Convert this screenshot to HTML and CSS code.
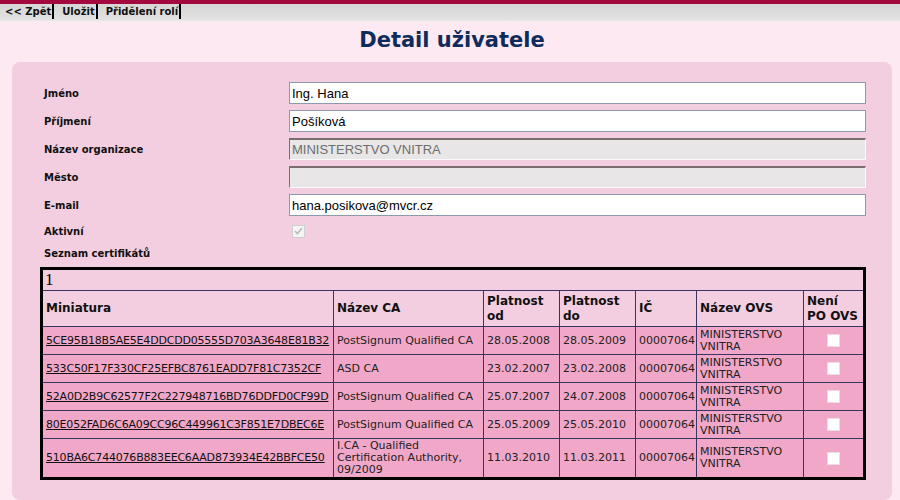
FILE: index.html
```html
<!DOCTYPE html>
<html lang="cs">
<head>
<meta charset="utf-8">
<title>Detail uživatele</title>
<link rel="stylesheet" href="styles.css">
</head>
<body>
<div class="topline"></div>
<nav class="toolbar">
  <a class="tb-item" href="#">&lt;&lt; Zpět</a>
  <a class="tb-item" href="#">Uložit</a>
  <a class="tb-item" href="#">Přidělení rolí</a>
</nav>
<h1 class="title">Detail uživatele</h1>
<div class="panel">
  <div class="form">
    <label class="lbl">Jméno</label>
    <input class="inp" type="text" value="Ing. Hana">
    <label class="lbl">Příjmení</label>
    <input class="inp" type="text" value="Pošíková">
    <label class="lbl">Název organizace</label>
    <input class="inp inp-dis" type="text" value="MINISTERSTVO VNITRA" disabled>
    <label class="lbl">Město</label>
    <input class="inp inp-dis" type="text" value="" disabled>
    <label class="lbl">E-mail</label>
    <input class="inp" type="text" value="hana.posikova@mvcr.cz">
    <label class="lbl">Aktivní</label>
    <div class="chk-cell"><span class="chk-dis"><svg width="9" height="8" viewBox="0 0 9 8"><path d="M1 4.2 L3.4 6.5 L8 1.2" fill="none" stroke="#b9b9b9" stroke-width="1.6"/></svg></span></div>
    <label class="lbl lbl-wide">Seznam certifikátů</label>
  </div>
  <table class="certs">
    <colgroup>
      <col class="c1"><col class="c2"><col class="c3"><col class="c4"><col class="c5"><col class="c6"><col class="c7">
    </colgroup>
    <thead>
      <tr class="pager"><td colspan="7">1</td></tr>
      <tr class="head">
        <th>Miniatura</th><th>Název CA</th><th>Platnost od</th><th>Platnost do</th><th>IČ</th><th>Název OVS</th><th>Není PO OVS</th>
      </tr>
    </thead>
    <tbody>
      <tr>
        <td><a href="#">5CE95B18B5AE5E4DDCDD05555D703A3648E81B32</a></td>
        <td>PostSignum Qualified CA</td><td>28.05.2008</td><td>28.05.2009</td><td>00007064</td><td class="ovs">MINISTERSTVO VNITRA</td><td class="ck"><input class="box" type="checkbox"></td>
      </tr>
      <tr>
        <td><a href="#">533C50F17F330CF25EFBC8761EADD7F81C7352CF</a></td>
        <td>ASD CA</td><td>23.02.2007</td><td>23.02.2008</td><td>00007064</td><td class="ovs">MINISTERSTVO VNITRA</td><td class="ck"><input class="box" type="checkbox"></td>
      </tr>
      <tr>
        <td><a href="#">52A0D2B9C62577F2C227948716BD76DDFD0CF99D</a></td>
        <td>PostSignum Qualified CA</td><td>25.07.2007</td><td>24.07.2008</td><td>00007064</td><td class="ovs">MINISTERSTVO VNITRA</td><td class="ck"><input class="box" type="checkbox"></td>
      </tr>
      <tr>
        <td><a href="#">80E052FAD6C6A09CC96C449961C3F851E7DBEC6E</a></td>
        <td>PostSignum Qualified CA</td><td>25.05.2009</td><td>25.05.2010</td><td>00007064</td><td class="ovs">MINISTERSTVO VNITRA</td><td class="ck"><input class="box" type="checkbox"></td>
      </tr>
      <tr>
        <td><a href="#">510BA6C744076B883EEC6AAD873934E42BBFCE50</a></td>
        <td>I.CA - Qualified Certification Authority, 09/2009</td><td>11.03.2010</td><td>11.03.2011</td><td>00007064</td><td class="ovs">MINISTERSTVO VNITRA</td><td class="ck"><input class="box" type="checkbox"></td>
      </tr>
    </tbody>
  </table>
</div>
</body>
</html>
```
FILE: styles.css
```css
html, body {
  margin: 0;
  padding: 0;
}
body {
  background: #fce9f2;
  font-family: "DejaVu Sans", Verdana, sans-serif;
  color: #000;
  width: 900px;
  overflow: hidden;
}
.topline {
  height: 4px;
  background: #a3093f;
}
.toolbar {
  display: flex;
  height: 16px;
  background: linear-gradient(#d6d6d6, #e2e2e2);
  border-bottom: 1px solid #ece4e8;
}
.tb-item {
  display: block;
  font-size: 10px;
  font-weight: bold;
  color: #111;
  text-decoration: none;
  padding: 0 1px 0 8px;
  border-right: 2px solid #000;
  height: 15px;
  margin-top: 0;
  line-height: 15px;
}
.tb-item:first-child {
  padding-left: 5px;
}
.title {
  margin: 0 8px 0 12px;
  padding-top: 4px;
  height: 37px;
  line-height: 30px;
  text-align: center;
  font-size: 21px;
  font-weight: bold;
  color: #0e2b5c;
}
.panel {
  margin: 0 8px 0 12px;
  background: #f3cee0;
  border-radius: 8px;
  padding: 20px 26px 20px 28px;
}
.form {
  display: grid;
  grid-template-columns: 249px 1fr;
  grid-template-rows: repeat(5, 22px) 18px 16px;
  row-gap: 6px;
  align-items: center;
}
.lbl {
  font-size: 10px;
  font-weight: bold;
  padding-left: 4px;
  color: #111;
}
.lbl-wide {
  grid-column: 1 / 3;
  line-height: 16px;
}
.inp {
  box-sizing: border-box;
  width: 100%;
  height: 22px;
  margin: 0;
  border: 1px solid #8c9aae;
  background: #fff;
  font-family: "Liberation Sans", Arial, sans-serif;
  font-size: 13px;
  color: #000;
  padding: 0 2px;
}
.inp-dis {
  background: #e8e6e6;
  border-top: 2px solid #7a6f6f;
  border-left: 1px solid #7a6f6f;
  border-right: 1px solid #fafafa;
  border-bottom: 1px solid #fafafa;
  color: #6e6e6e;
}
.chk-cell {
  display: flex;
  align-items: center;
  padding-left: 3px;
}
.chk-dis {
  display: inline-flex;
  align-items: center;
  justify-content: center;
  width: 11px;
  height: 11px;
  border: 1px solid #cfcfcf;
  background: #f5f5f5;
}
.certs {
  margin-top: 5px;
  width: 826px;
  table-layout: fixed;
  border-collapse: separate;
  border-spacing: 0;
  border: 3px solid #000;
  box-sizing: border-box;
}
.c1 { width: 291px; }
.c2 { width: 150px; }
.c3 { width: 76px; }
.c4 { width: 76px; }
.c5 { width: 61px; }
.c6 { width: 107px; }
.c7 { width: 59px; }
.pager td {
  font-family: "Liberation Serif", "Times New Roman", serif;
  font-size: 17px;
  height: 20px;
  line-height: 20px;
  padding: 0 2px;
  background: #f3cee0;
}
.head th {
  background: #f3cee0;
  font-size: 12px;
  font-weight: bold;
  text-align: left;
  line-height: 15px;
  height: 36px;
  padding: 0 3px;
  border-top: 1px solid #3a3461;
  border-right: 1px solid #3a3461;
  color: #111;
  box-sizing: border-box;
}
.head th:last-child,
tbody td:last-child {
  border-right: 0;
}
tbody td {
  background: #f1a7c8;
  font-size: 11px;
  line-height: 12px;
  height: 28px;
  padding: 1px 3px;
  border-top: 1px solid #3a3461;
  border-right: 1px solid #3a3461;
  color: #222;
  box-sizing: border-box;
  vertical-align: middle;
}
tbody td a {
  color: #111;
  text-decoration: underline;
  letter-spacing: -0.2px;
}
td.ck {
  text-align: center;
}
.box {
  appearance: none;
  -webkit-appearance: none;
  width: 13px;
  height: 13px;
  margin: 0;
  background: #fff;
  border: 1px solid #e9dde3;
  vertical-align: middle;
}
```
